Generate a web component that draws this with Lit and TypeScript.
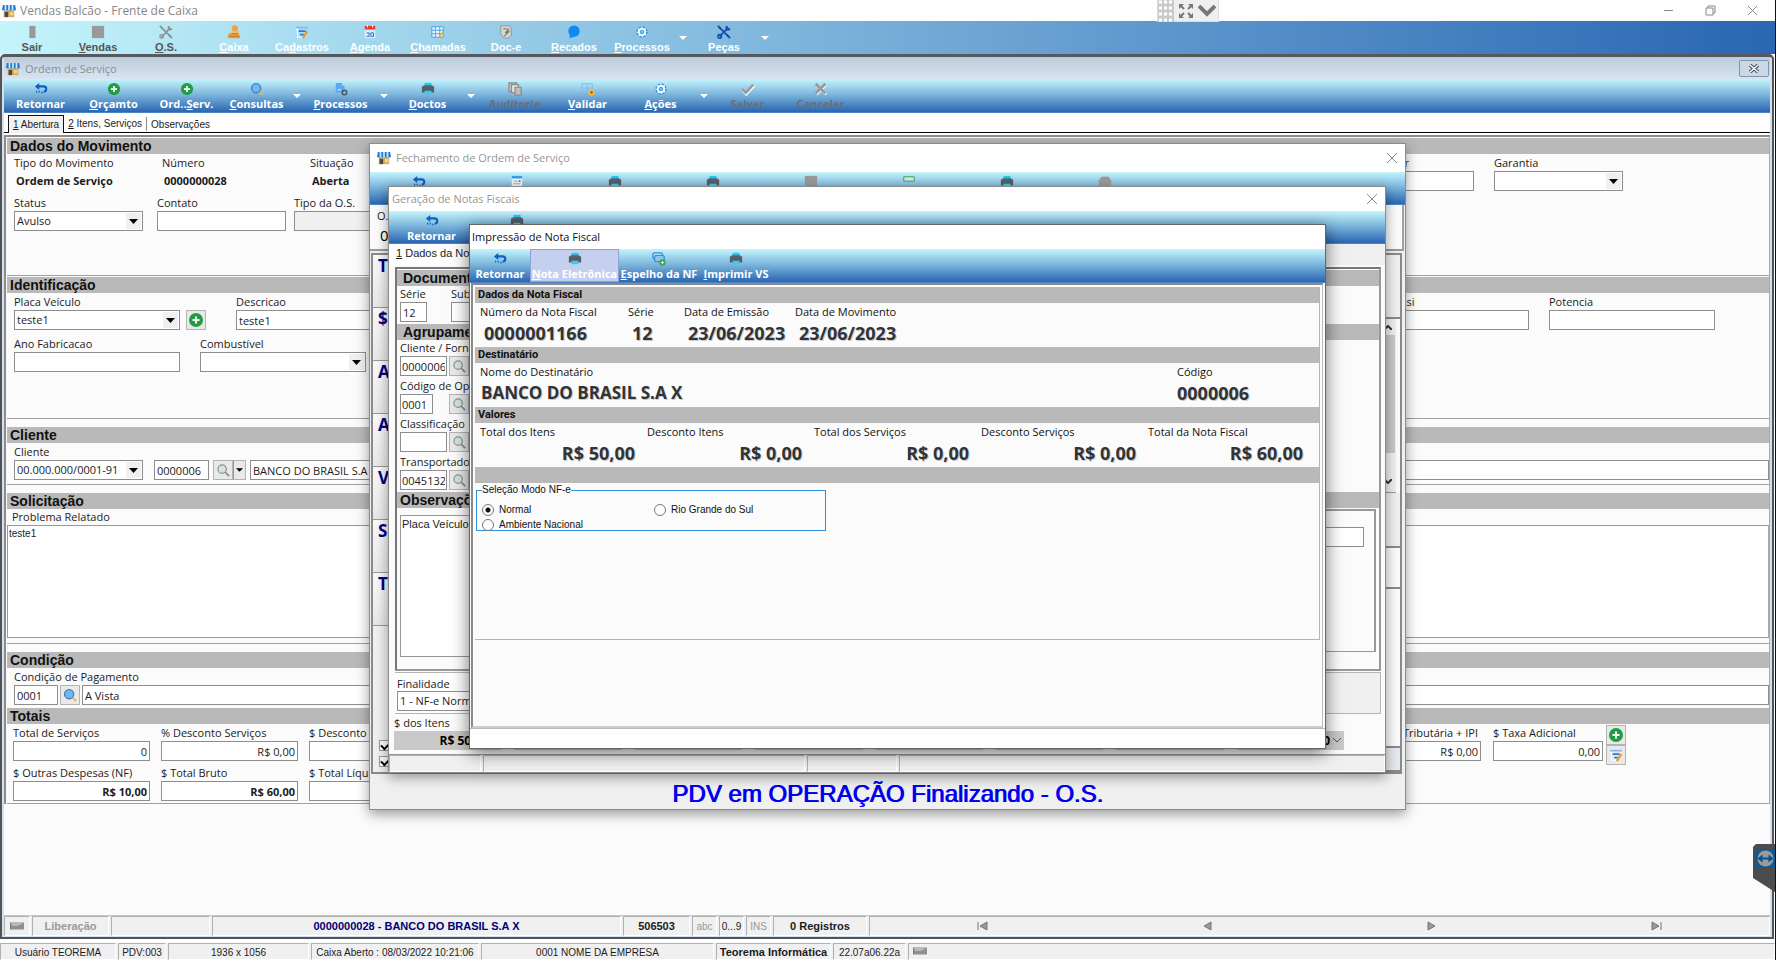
import { LitElement, html, css, svg, nothing } from "lit";
import { customElement } from "lit/decorators.js";
import { classMap } from "lit/directives/class-map.js";

const glyphs: Record<string, unknown> = {
  store: svg`<path d="M2 7h12v8H2z" fill="#c9a97a"/><path d="M3 9h4v6H3z" fill="#5a4636"/><path d="M9 9h4v4H9z" fill="#ffd75a"/><path d="M1 1h14l1 6H0z" fill="#1e78d6"/><path d="M3 1h2v6H3zM7 1h2v6H7zM11 1h2v6h-2z" fill="#cfe6fa"/>`,
  back: svg`<path d="M4 5h7a3 3 0 0 1 0 6" fill="none" stroke="#0f5fc2" stroke-width="2.4"/><path d="M1 5l5-4v8z" fill="#0f5fc2"/><path d="M3 10v2M6 10v2M9 11v2" stroke="#0f5fc2" stroke-width="1.4"/>`,
  plus: svg`<circle cx="8" cy="8" r="7" fill="#1f9d45"/><path d="M8 4.500v7M4.500 8h7" stroke="#fff" stroke-width="2"/>`,
  search: svg`<path d="M11 11l4 4" stroke="#e8b25a" stroke-width="2"/><circle cx="7" cy="7" r="5.200" fill="#6db9f5" stroke="#4a7fb5" stroke-width="1.600"/>`,
  searchGray: svg`<path d="M10 10l5 5" stroke="#8a8a8a" stroke-width="2"/><circle cx="7" cy="7" r="4.800" fill="#d3e2e2" stroke="#8a9494" stroke-width="1.400"/>`,
  docGear: svg`<path d="M2 1h7l3 3v8H2z" fill="#5aa9f2"/><path d="M9 1v3h3z" fill="#bfe0fb"/><path d="M4 9h4" stroke="#fff"/><circle cx="12" cy="12" r="2.600" fill="#8db4d6" stroke="#44566a" stroke-width="1.600"/>`,
  printer: svg`<path d="M4 1h8v4H4z" fill="#27c4ea"/><path d="M1 5h14v7H1z" fill="#565d66"/><path d="M2 5l1-1h10l1 1z" fill="#3d444c"/><path d="M4 10h8v4H4z" fill="#35cdf0"/>`,
  copies: svg`<path d="M1 1h9v10H1z" fill="#c4c4c4" stroke="#8b8b8b" stroke-width="1.400"/><path d="M4 3h8v9H4z" fill="#e4e4e4" stroke="#8b8b8b" stroke-width="1.400"/><path d="M8 6h7v9H8z" fill="#bdbdbd" stroke="#8b8b8b" stroke-width="1.400"/>`,
  valid: svg`<path d="M1 2h12v10H1zM1 7h12M7 2v10" fill="none" stroke="#7fbdf0"/><circle cx="12" cy="12" r="2.600" fill="#f04a1c" stroke="#ffc21a" stroke-width="1.800"/>`,
  gear: svg`<circle cx="8" cy="8" r="5.500" fill="#eaf7ff" stroke="#2f9be6" stroke-width="2" stroke-dasharray="2.600 1.720"/><circle cx="8" cy="8" r="4.600" fill="#f4fbff"/><circle cx="8" cy="8" r="2" fill="#8ec5ec" stroke="#2f86c9"/>`,
  check: svg`<path d="M2 9l4 5 9-10" fill="none" stroke="#fff" stroke-width="3"/><path d="M1.500 8l4 4.500L14 3" fill="none" stroke="#9a9a9a" stroke-width="2.800"/>`,
  cross: svg`<path d="M3 3l11 11M14 3L3 14" stroke="#f4f4f4" stroke-width="3"/><path d="M2 2l11 11M13 2L2 13" stroke="#9a9a9a" stroke-width="3.200"/>`,
  door: svg`<path d="M5 1h7v14H5z" fill="#999"/>`,
  block: svg`<path d="M1 1h14v14H1z" fill="#999"/>`,
  tools: svg`<path d="M3 14L13 3M3 3l10 10" stroke="#8f8f8f" stroke-width="1.800"/><circle cx="3" cy="13" r="2" fill="none" stroke="#8f8f8f" stroke-width="1.500"/><path d="M11 1v4h4M11 11l4 4M1 1l3 3" fill="none" stroke="#8f8f8f" stroke-width="2"/>`,
  toolsBlue: svg`<path d="M3 13L13 3M3 3l10 10" stroke="#0f4fae" stroke-width="2"/><circle cx="3" cy="13" r="2" fill="none" stroke="#0f4fae" stroke-width="1.800"/><path d="M11 1v4h4M11 11l4 4M1 1l3 3" fill="none" stroke="#0f4fae" stroke-width="2.400"/>`,
  money: svg`<circle cx="9" cy="4" r="3.600" fill="#eda345"/><path d="M5 7h9v3H5z" fill="#f3bd6c"/><path d="M3 9h9l3 3v3H1v-4z" fill="#e7a04a"/><path d="M2 13h12M5 10h8" stroke="#b8731f"/>`,
  form: svg`<path d="M1 2h14v2H1z" fill="#8fb4ee"/><path d="M4 7h8M6 11h4" stroke="#1f7fe6" stroke-width="2"/><path d="M1 5h2v9h7" fill="none" stroke="#fff" stroke-width="1.200"/><path d="M9 15l5-8" stroke="#f7941d" stroke-width="2.400"/>`,
  calendar: svg`<path d="M2 6h12v9H2z" fill="#d8efff"/><path d="M2 1h12v4H2z" fill="#e23b2e"/><path d="M5 0v3M11 0v3" stroke="#fff"/><path d="M4 9h3v4H4M9 9h3v4H9z" fill="none" stroke="#2a62ad"/>`,
  table: svg`<path d="M1 2h13v12H1z" fill="#e9f6ff" stroke="#3a9ee6"/><path d="M1 6h13M1 10h13M5 2v12M10 2v12" stroke="#3a9ee6"/><path d="M9 14l5-6" stroke="#f7b21d" stroke-width="2"/>`,
  doce: svg`<path d="M2 1h10l2 3v8l-4 3H6L2 10z" fill="#d3d8d2" stroke="#8c938c"/><path d="M5 4l6 1-4 4 5-2-6 6" fill="none" stroke="#74806f" stroke-width="1.300"/>`,
  chat: svg`<circle cx="8" cy="7" r="6.500" fill="#0f8af0"/><path d="M3 10v5l6-2z" fill="#0f8af0"/>`,
  mirror: svg`<rect x="1" y="1" width="11" height="7" rx="2" fill="none" stroke="#2f8fd8" stroke-width="1.400"/><rect x="3" y="4" width="11" height="7" rx="2" fill="#8ec6ea" stroke="#2f8fd8" stroke-width="1.400"/><circle cx="12" cy="12" r="3.600" fill="#2ea64f"/><path d="M12 10v4M10 12h4" stroke="#fff"/>`,
  sheet: svg`<path d="M2 1h12v14H2z" fill="#eaf4fd"/><path d="M2 1h12v3H2z" fill="#3d9be8"/><path d="M4 7h5M4 10h8" stroke="#8ba6bf"/><path d="M10 6h2v2h-2z" fill="#e23b2e"/>`,
  greenBox: svg`<path d="M2 2h12v5H2z" fill="#cfe9e6" stroke="#2d9a4b"/>`,
  octagon: svg`<path d="M4 2h8l3 4v8H1V6z" fill="#999"/>`,
  card: svg`<path d="M0 4h16v8H0z" fill="#8f8f8f"/><path d="M0 4h16L9 8H3z" fill="#b9b9b9"/><path d="M0 12V4" stroke="#666"/>`,
};
const icon = (name: string, size = "") =>
  html`<svg class="icon ${size}" viewBox="0 0 16 16" aria-hidden="true">${glyphs[name]}</svg>`;

interface Tool { icon: string; text?: string; key?: number; menu?: boolean; off?: boolean; dark?: boolean; on?: boolean; narrow?: boolean }

const mainTools: Tool[] = [
  { icon: "door", text: "Sair", dark: true },
  { icon: "block", text: "Vendas", key: 0, dark: true },
  { icon: "tools", text: "O.S.", key: 0, dark: true },
  { icon: "money", text: "Caixa", key: 0 },
  { icon: "form", text: "Cadastros", key: 2 },
  { icon: "calendar", text: "Agenda", key: 0 },
  { icon: "table", text: "Chamadas", key: 0 },
  { icon: "doce", text: "Doc-e" },
  { icon: "chat", text: "Recados", key: 0 },
  { icon: "gear", text: "Processos", key: 0, menu: true },
  { icon: "toolsBlue", text: "Peças", menu: true },
];
const orderTools: Tool[] = [
  { icon: "back", text: "Retornar" },
  { icon: "plus", text: "Orçamto", key: 0 },
  { icon: "plus", text: "Ord..Serv.", key: 5 },
  { icon: "search", text: "Consultas", key: 0, menu: true, narrow: true },
  { icon: "docGear", text: "Processos", key: 0, menu: true },
  { icon: "printer", text: "Doctos", key: 0, menu: true },
  { icon: "copies", text: "Auditoria", key: 0, off: true },
  { icon: "valid", text: "Validar", key: 0 },
  { icon: "gear", text: "Ações", key: 0, menu: true },
  { icon: "check", text: "Salvar", key: 0, off: true },
  { icon: "cross", text: "Cancelar", off: true },
];
const closingTools: Tool[] = ["back", "sheet", "printer", "printer", "block", "greenBox", "printer", "octagon"].map((i) => ({ icon: i }));
const notesTools: Tool[] = [{ icon: "back", text: "Retornar" }, { icon: "printer" }];
const printTools: Tool[] = [
  { icon: "back", text: "Retornar" },
  { icon: "printer", text: "Nota Eletrônica", key: 0, on: true },
  { icon: "mirror", text: "Espelho da NF", key: 0 },
  { icon: "printer", text: "Imprimir VS", key: 0 },
];

const keyed = (t: string, k?: number) =>
  k === undefined ? t : html`${t.slice(0, k)}<u>${t[k]}</u>${t.slice(k + 1)}`;

const toolbar = (tools: Tool[], kind: string) => html`<nav class="toolbar ${kind}">
  ${tools.map((t) => html`<button class=${classMap({ tool: true, off: !!t.off, dark: !!t.dark, on: !!t.on, narrow: !!t.narrow })} ?disabled=${!!t.off}>
      ${icon(t.icon)}${t.text ? html`<span>${keyed(t.text, t.key)}</span>` : nothing}
    </button>${t.menu ? html`<button class="drop" aria-label=${t.text}><svg viewBox="0 0 8 4"><path d="M0 0h8L4 4z" fill="#fff"/></svg></button>` : nothing}`)}
</nav>`;

const text = (id: string, label: string, value = "", cls = "") => html`<div class="field ${cls}">
  <label for=${id}>${label}</label><input id=${id} .value=${value} />
</div>`;

const pick = (id: string, label: string, value = "", cls = "") => html`<div class="field ${cls}">
  <label for=${id}>${label}</label>
  <div class="sel"><select id=${id}><option>${value}</option></select>
  <span class="arrow"><svg viewBox="0 0 9 5"><path d="M0 0h9L4.500 5z"/></svg></span></div>
</div>`;

const lookup = (id: string, label: string, value: string, cls = "") => html`<div class="field">
  <label for=${id}>${label}</label>
  <div class="line"><input id=${id} class=${cls} .value=${value} /><button class="mini lens" aria-label=${label}>${icon("searchGray")}</button></div>
</div>`;

const closeX = html`<button class="x" aria-label="Fechar"><svg viewBox="0 0 10 10"><path d="M0 0l10 10M10 0L0 10"/></svg></button>`;

@customElement("app-root")
export class AppRoot extends LitElement {
  static styles = css`
    :host { display: block; font: 11px/16px "Open Sans", sans-serif; color: #1c1c1c; --ms: "Liberation Sans", Arial, sans-serif; }
    * { box-sizing: border-box; }
    button, input, select, textarea { font: inherit; color: inherit; margin: 0; border-radius: 0; }
    button { padding: 0; border: 0; background: none; }
    fieldset { min-width: 0; }
    .icon { width: 14px; height: 14px; display: block; flex: none; }
    .s16 { width: 16px; height: 16px; }
    .screen { position: relative; display: flex; flex-direction: column; min-height: 100vh; background: #fdfdfd; border-right: 1px solid #111; overflow: hidden; }

    .titlebar { display: flex; align-items: center; height: 21px; padding-left: 2px; gap: 4px; color: #888; font-size: 12px; background: #fefefe; }
    .titlebar .caption { flex: 1; }
    .sysbuttons { display: flex; gap: 31px; padding-right: 17px; }
    .sysbuttons svg { display: block; width: 11px; height: 11px; fill: none; stroke: #888; }
    .remote { position: absolute; top: 0; left: 65.200%; display: flex; height: 22px; background: #efefef; border: 1px solid #ddd; border-top: 0; align-items: center; gap: 5px; padding-right: 2px; }
    .remote svg { display: block; }

    .toolbar { display: flex; height: 33px; background: linear-gradient(#c4f5fc, #7fb8de 45%, #2a66b2); border-bottom: 1px solid #4a83c6; }
    .toolbar.top { background: linear-gradient(90deg, #c4f5fc, #5c96cc 66%, #2a66b2); font-family: var(--ms); border-bottom: 0; }
    .tool { display: flex; flex-direction: column; align-items: center; gap: 1px; color: #fff; font-weight: 700; padding-top: 3px; white-space: nowrap; flex: none; }
    .tool span { line-height: 14px; }
    .top .tool { width: 68px; padding-top: 4px; }
    .top .tool:first-child { width: 64px; }
    .order { height: 34px; }
    .toolbar.order .tool { width: 73px; padding-top: 3px; }
    .toolbar.order .narrow { width: 67px; }
    .closing .tool { width: 98px; }
    .notes .tool { width: 85px; }
    .print .tool { width: 74px; padding-top: 2px; border: 1px solid transparent; }
    .print .tool:nth-child(1) { width: 60px; }
    .print .tool:nth-child(2) { width: 89px; }
    .print .tool:nth-child(3) { width: 80px; }
    .print .tool.on { background: #c5d0ee; border-color: #8f9fd8; }
    .tool.dark { color: #555; }
    .tool.off { color: #66707c; }
    .drop { width: 14px; }
    .drop svg { width: 8px; height: 4px; display: block; margin: 0 auto; }

    .mdi { flex: 1; display: flex; flex-direction: column; margin-right: 1px; border: 2px solid #505358; border-top: 3px solid #55585c; border-radius: 5px 5px 0 0; background: #d6e1ee; padding: 0 2px 1px; min-width: 0; }
    .mdititle { display: flex; align-items: center; height: 22px; gap: 5px; padding: 1px 0 0 2px; color: #8a8f95; background: linear-gradient(#bccbda, #d8e4f1); }
    .mdititle .caption { flex: 1; }
    .mdiclose { width: 30px; height: 17px; border: 1px solid #8295ae; border-radius: 2px; background: #cbd8e6; margin-right: 1px; }
    .mdiclose svg { display: block; width: 10px; height: 9px; margin: 0 auto; }
    .tabs { display: flex; height: 20px; padding: 2px 0 0 4px; background: #fefefe; border-bottom: 1px solid #000; font: 10px/17px var(--ms); }
    .tab { padding: 0 4px; height: 17px; white-space: nowrap; }
    .tab.active { border: 1px solid #111; border-bottom: 0; height: 18px; background: #f2f2f2; padding: 0 4px; }
    .tab + .tab + .tab { border-left: 1px solid #888; height: 14px; margin-top: 2px; line-height: 13px; }
    .sheet { flex: 1; background: #fbfbfb; border-top: 2px solid #fefefe; }
    .form { border: 2px solid #8c8c8c; border-right: 1px solid #aaa; border-bottom: 0; padding: 1px 0 0 1px; height: 100%; }

    .sec { border-bottom: 1px solid #a0a0a0; margin-bottom: 8px; }
    .sec.tight { margin-bottom: 1px; }
    .sec.nob { border-bottom: 0; }
    .bar { height: 16px; background: #b9b9b9; font: 700 14px/16px var(--ms); padding-left: 3px; margin: 0; color: #111; }
    .body { padding: 1px 0 0 7px; display: flex; }
    .stack { display: flex; flex-direction: column; gap: 4px; flex: 1; min-width: 0; }
    .stack.loose { gap: 6px; }
    .row { display: flex; align-items: flex-start; }
    .s-mov { min-height: 138px; }
    .s-id { min-height: 142px; }
    .s-cli { min-height: 58px; }
    .s-cond { min-height: 55px; }
    .s-tot { min-height: 96px; }

    .field { display: flex; flex-direction: column; white-space: nowrap; min-width: 0; flex: none; }
    .field input, .lineinput, select { height: 20px; border: 1px solid #8e8e8e; background: #fff; padding: 0 2px; width: 100%; outline: 0; line-height: 16px; }
    label { display: block; height: 16px; }
    .sel { display: grid; }
    .sel > * { grid-area: 1 / 1; }
    select { appearance: none; }
    .arrow { justify-self: end; margin: 2px; width: 15px; display: grid; place-items: center; background: #f0f0f0; pointer-events: none; }
    .arrow svg { width: 9px; height: 5px; }
    .w129 { width: 129px; }
    .w166 { width: 166px; }
    .w110 { width: 110px; }
    .w137 { width: 137px; }
    .w44 { width: 44px; }
    .lineinput.w55 { width: 55px; flex: none; }
    .grow { flex: 1; }
    .right input { text-align: right; }
    .strong input { font-weight: 700; }
    .dim input { background: #f0f0f0; }
    .endlabel label { text-align: right; padding-right: 3px; }
    .g3 { gap: 3px; }
    .g11 { gap: 11px; }
    .g14 { gap: 14px; }
    .g20 { gap: 20px; }
    .info { width: 148px; }
    .info b { display: block; padding: 2px 0 0 2px; height: 20px; }
    .tipo { margin-left: 8px; }
    .placa { margin-left: 6px; }
    .desc { margin-left: 30px; }
    .cli { flex: 1; margin-left: 11px; gap: 4px; }
    .cond { flex: 1; gap: 2px; margin-left: 2px; }
    .edge { margin-left: auto; display: flex; gap: 20px; }
    .edge.tot { gap: 12px; }
    .pad-mov { padding-right: 146px; }
    .pad-id { padding-right: 54px; }
    .pad-tot { padding-right: 143px; padding-left: 6px; }
    .mini { display: grid; place-items: center; width: 20px; height: 20px; background: #e9e9e9; border: 1px solid #b4b4b4; flex: none; }
    .mini.slim { width: 13px; border-left: 1px solid #999; }
    .mini.slim svg { width: 7px; height: 4px; }
    .line { display: flex; align-items: center; }
    .under { margin-top: 16px; }
    .minis { display: flex; flex-direction: column; }
    .memo { display: block; width: 100%; height: 113px; border: 1px solid #999; border-right-color: #aaa; background: #fff; resize: none; padding: 1px; outline: 0; font: 10px/14px var(--ms); }
    .memolabel { padding-left: 5px; }
    .s-sol { padding-bottom: 5px; }

    .nav { display: flex; height: 21px; background: #f0f0f0; border-top: 1px solid #c8c8c8; gap: 2px; font: 10px/19px var(--ms); }
    .cell { border: 1px solid #b0b0b0; border-right-color: #fff; border-bottom-color: #fff; text-align: center; white-space: nowrap; overflow: hidden; }
    .cell.b { font-weight: 700; font-size: 11px; }
    .cell.grayed { color: #999; }
    .cell.navy { color: #000078; }
    .c26 { width: 26px; display: grid; place-items: center; }
    .c76 { width: 77px; }
    .c99 { width: 99px; }
    .c410 { width: 409px; }
    .c67 { width: 67px; }
    .c25 { width: 25px; }
    .c93 { width: 94px; }
    .cursor { flex: 1; display: grid; grid-template-columns: repeat(4, 1fr); place-items: center; }
    .cursor svg { width: 12px; height: 10px; display: block; fill: #9a9a9a; stroke: #777; }
    .status { display: flex; margin-top: 4px; height: 17px; background: #f0f0f0; gap: 2px; font: 10px/17px var(--ms); }
    .s116 { width: 116px; }
    .s48 { width: 48px; }
    .s141 { width: 141px; }
    .s168 { width: 168px; }
    .s233 { width: 233px; }
    .s114 { width: 115px; }
    .s72 { width: 73px; }
    .s-rest { flex: 1; padding-left: 4px; }

    .win { position: absolute; display: flex; flex-direction: column; background: #fbfbfb; border: 1px solid #8b8b8b; box-shadow: 0 4px 12px rgba(0, 0, 0, 0.4); }
    .wtitle { display: flex; align-items: center; height: 24px; padding-left: 2px; gap: 5px; color: #969696; background: #fff; flex: none; }
    .wtitle .caption { flex: 1; }
    .x svg { width: 10px; height: 10px; display: block; stroke: #8a8a8a; fill: none; }
    .x { margin-right: 8px; }

    .w-close { left: 369px; top: 143px; width: 1037px; height: 667px; background: #f0f0f0; }
    .w-close .wtitle { height: 28px; padding-left: 7px; }
    .os { height: 46px; background: #fbfbfb; border-right: 2px solid #a0a0a0; border-bottom: 2px solid #999; padding: 3px 0 0 7px; margin-right: 1px; }
    .os big { display: block; font: 15px/22px "Open Sans", sans-serif; padding-left: 3px; color: #000; }
    .closebody { flex: 1; display: flex; margin: 2px 3px 0 1px; border: 2px solid #8a8a8a; background: #fbfbfb; min-height: 0; }
    .marks { flex: 1; margin: 0; padding: 0; list-style: none; color: #000080; font: 700 17px/22px "Open Sans", sans-serif; background: #f0f0f0; }
    .marks li { height: 53px; padding-left: 5px; border-bottom: 1px solid #999; background: linear-gradient(#fafafa, #e8e8e8); }
    .marks .ticks { height: auto; background: none; border: 0; padding: 114px 0 0 6px; }
    .tick { display: block; appearance: none; width: 11px; height: 11px; margin-bottom: 5px; background: #fff; border: 1px solid #999; }
    .tick::after { content: ""; display: block; width: 7px; height: 4px; margin: 1px; border: solid #000; border-width: 0 0 2px 2px; transform: rotate(-45deg); }
    .rail { width: 20px; display: flex; flex-direction: column; background: #fbfbfb; }
    .rail i { border-bottom: 2px solid #8a8a8a; }
    .r1 { height: 64px; background: #f0f0f0; }
    .r2 { height: 55px; background: #f0f0f0; }
    .r3 { height: 41px; }
    .r4 { flex: 1; }
    .r5 { height: 24px; background: #e6eaee; }
    .scroll { height: 174px; width: 16px; display: flex; flex-direction: column; align-items: center; background: #f0f0f0; padding: 6px 0 8px; gap: 5px; border-bottom: 1px solid #999; }
    .scroll svg { width: 8px; height: 5px; stroke: #333; stroke-width: 2; fill: none; }
    .thumb { width: 13px; height: 118px; background: #c8c8c8; margin-bottom: auto; }
    .pdv { height: 35px; display: grid; place-items: center; padding-top: 4px; color: #0000f0; font: 24px/28px var(--ms); text-shadow: 1px 0 0 #0000f0; }

    .w-notes { left: 388px; top: 186px; width: 998px; height: 587px; }
    .w-notes .wtitle { height: 24px; }
    .w-notes .caption { padding-left: 1px; }
    .ntabs { height: 21px; background: linear-gradient(90deg, #fdfdfd 120px, #f0f0f0 120px); padding-left: 7px; font: 11px/18px var(--ms); }
    .npanel { margin: 2px 4px 0 6px; border: 2px solid #777; border-right-color: #999; border-bottom-color: #999; padding-top: 1px; height: 404px; }
    .npanel .bar { padding-left: 6px; }
    .npanel .bar.obs { padding-left: 3px; }
    .npanel .body { padding: 1px 0 2px 3px; }
    .npanel .stack { gap: 3px; }
    .npanel .line { justify-content: space-between; width: 69px; }
    .g24 { gap: 24px; }
    .w27 { width: 27px; }
    .npanel .line input { padding: 0 1px; }
    .npanel .line input.w46 { width: 47px; }
    .npanel .line input.w33 { width: 33px; }
    .npanel label { height: 15px; line-height: 14px; }
    .obsrow { display: flex; height: 150px; padding: 0 3px; }
    .obsrow .memo { flex: 1; height: 142px; margin-top: 7px; font-size: 11px; line-height: 14px; }
    .side { width: 180px; height: 143px; border: solid #999; border-width: 2px 2px 1px 0; padding: 16px 10px 0 0; margin-top: 1px; }
    .final { margin: 1px 4px 0 6px; padding: 3px 0 2px 2px; border: 1px solid #b5b5b5; border-left: 0; background: linear-gradient(90deg, #fdfdfd 120px, #f0f0f0 120px); }
    .final label { height: 15px; line-height: 15px; }
    .sumrow { display: grid; grid-template-columns: repeat(8, 1fr); gap: 13px; margin: 1px 41px 0 5px; }
    .sum output { display: flex; align-items: center; justify-content: flex-end; height: 19px; background: #c9c9c9; font: 700 12px/18px "Open Sans", sans-serif; color: #000; padding-right: 3px; gap: 3px; }
    .sum:first-child output { padding-right: 13px; }
    .sum output svg { width: 8px; height: 5px; fill: none; stroke: #555; }
    .sum > span { display: block; height: 16px; }
    .ncells { margin-top: auto; display: flex; gap: 2px; height: 18px; border-top: 1px solid #999; background: #f0f0f0; }
    .n92 { width: 92px; }
    .n322 { width: 322px; }
    .n90 { width: 90px; }

    .w-print { left: 469px; top: 224px; width: 857px; height: 525px; color: #111; border-color: #666; box-shadow: 0 4px 16px rgba(0, 0, 0, 0.55); }
    .w-print .wtitle { color: #111; height: 24px; }
    .w-print .toolbar { height: 34px; }
    .ppanel { flex: 1; margin: 0 2px 0 1px; border: 2px solid #8a8a8a; border-right: 1px solid #bbb; border-bottom-color: #ccc; padding: 2px 2px 0 2px; }
    .ppanel .bar { font: 700 11px/15px Roboto, sans-serif; }
    .upper { height: 353px; border-bottom: 1px solid #b5b5b5; border-right: 1px solid #b5b5b5; }
    .facts { height: 44px; display: flex; padding: 1px 0 0 5px; }
    .fact span { display: block; white-space: nowrap; }
    .fact b { display: block; margin-top: 1px; font: 700 18px/24px "Open Sans", sans-serif; color: #333; padding-left: 4px; white-space: nowrap; text-shadow: 1px 1px 0 #c4ccd4; }
    .fact.wide b { font-size: 17px; padding-left: 1px; }
    .f148 { width: 148px; }
    .f56 { width: 56px; }
    .f111 { width: 111px; }
    .facts .last { margin-left: auto; width: 142px; }
    .facts .last b { padding-left: 0; }
    .money { display: grid; grid-template-columns: repeat(5, 167px); padding-left: 5px; margin-right: -4px; }
    .money b { text-align: right; padding-right: 12px; }
    .mode { width: 350px; height: 48px; margin: 0 0 0 1px; padding: 5px 0 0 5px; border: 1px solid #2f8fdc; font: 10px/15px var(--ms); display: grid; grid-template-columns: 172px 1fr; align-content: start; color: #111; }
    .mode legend { padding: 0; line-height: 14px; }
    .mode label { display: flex; align-items: center; gap: 5px; height: 15px; }
    .mode input { appearance: none; width: 12px; height: 12px; border: 1px solid #777; border-radius: 50%; background: #fff; }
    .mode input:checked { background: radial-gradient(circle, #111 0 2px, #fff 3px); }
    .pfoot { height: 20px; background: #fefefe; border-top: 1px solid #bbb; }

    .tv { position: absolute; right: 0; top: 844px; width: 22px; height: 48px; background: #4c4c4c; clip-path: polygon(0 3px, 3px 0, 100% 0, 100% 100%, 0 34px); padding: 5px 0 0 3px; }
    .tv svg { display: block; width: 19px; height: 19px; }
  `;

  render() {
    return html`<div class="screen">
      <header class="titlebar">${icon("store")}<span class="caption">Vendas Balcão - Frente de Caixa</span>
        <div class="sysbuttons">
          <button aria-label="Minimizar"><svg viewBox="0 0 11 11"><path d="M1 5.500h9"/></svg></button>
          <button aria-label="Restaurar"><svg viewBox="0 0 11 11"><path d="M1 3h7v7H1zM3 3V1h7v7H8"/></svg></button>
          <button aria-label="Fechar"><svg viewBox="0 0 11 11"><path d="M1 1l9 9M10 1l-9 9"/></svg></button>
        </div>
      </header>
      ${toolbar(mainTools, "top")}
      ${this.order()}
      <footer class="status">
        <span class="cell s116">Usuário TEOREMA</span><span class="cell s48">PDV:003</span><span class="cell s141">1936 x 1056</span>
        <span class="cell s168">Caixa Aberto : 08/03/2022 10:21:06</span><span class="cell s233">0001 NOME DA EMPRESA</span>
        <span class="cell b s114">Teorema Informática</span><span class="cell s72">22.07a06.22a</span><span class="cell s-rest">${icon("card")}</span>
      </footer>
      ${this.closing()} ${this.notes()} ${this.printing()}
      <div class="remote">
        <svg width="16" height="22" viewBox="0 0 16 22"><path d="M0 0h16v22H0z" fill="#c9c9c9"/><path d="M1 2h15M1 8h15M1 14h15M1 20h15" stroke="#fff" stroke-width="3" stroke-dasharray="3 2"/></svg>
        <svg width="14" height="14" viewBox="0 0 14 14" fill="#777"><path d="M0 0h5L0 5zM14 0v5L9 0zM0 14V9l5 5zM14 14H9l5-5z"/><path d="M2 2l3 3M12 2L9 5M2 12l3-3M12 12L9 9" stroke="#777" stroke-width="2"/></svg>
        <svg width="18" height="12" viewBox="0 0 18 12"><path d="M1 1l8 8 8-8" fill="none" stroke="#777" stroke-width="4"/></svg>
      </div>
      <div class="tv"><svg viewBox="0 0 19 19"><path d="M0 0h19v19H0z" fill="#0d5a96"/><circle cx="9.500" cy="9.500" r="8" fill="#9a9a9a"/><path d="M1.500 9.500l5-4v3h6v-3l5 4-5 4v-3h-6v3z" fill="#0d4f88"/></svg></div>
    </div>`;
  }

  order() {
    return html`<main class="mdi">
      <div class="mdititle">${icon("store")}<span class="caption">Ordem de Serviço</span>
        <button class="mdiclose" aria-label="Fechar"><svg viewBox="0 0 10 9"><path d="M1 1l8 7M9 1L1 8" stroke="#4a5058" stroke-width="3.500"/><path d="M1 1l8 7M9 1L1 8" stroke="#fff" stroke-width="1.500"/></svg></button></div>
      ${toolbar(orderTools, "order")}
      <div class="tabs"><button class="tab active"><u>1</u> Abertura</button><button class="tab"><u>2</u> Itens, Serviços</button><button class="tab">Observações</button></div>
      <div class="sheet"><div class="form">
        <section class="sec tight s-mov"><h2 class="bar">Dados do Movimento</h2>
          <div class="body pad-mov"><div class="stack">
            <div class="row"><div class="info">Tipo do Movimento<b>Ordem de Serviço</b></div><div class="info">Número<b>0000000028</b></div><div class="info">Situação<b>Aberta</b></div></div>
            <div class="row">
              <div class="row g14">${pick("st", "Status", "Avulso", "w129")}${text("ct", "Contato", "", "w129")}</div>
              ${text("to", "Tipo da O.S.", "", "w137 dim tipo")}
            </div></div>
            <div class="edge">${text("vl", "Executor", "", "w110")}${pick("ga", "Garantia", "", "w129")}</div>
          </div></section>
        <section class="sec s-id"><h2 class="bar">Identificação</h2>
          <div class="body pad-id"><div class="stack loose">
            <div class="row">
              ${pick("pv", "Placa Veículo", "teste1", "w166")}
              <button class="mini under placa" aria-label="Adicionar">${icon("plus", "s16")}</button>
              ${text("de", "Descricao", "teste1", "w166 desc")}</div>
            <div class="row g20">${text("af", "Ano Fabricacao", "", "w166")}${pick("cb", "Combustível", "", "w166")}</div></div>
            <div class="edge">${text("ch", "Nr. Chassi", "", "w166")}${text("po", "Potencia", "", "w166")}</div>
          </div></section>
        <section class="sec s-cli"><h2 class="bar">Cliente</h2>
          <div class="body">${pick("cl", "Cliente", "00.000.000/0001-91", "w129")}
            <div class="line under cli">
              <input class="lineinput w55" aria-label="Código" .value=${"0000006"} />
              <div class="line"><button class="mini" aria-label="Pesquisar">${icon("searchGray")}</button><button class="mini slim" aria-label="Opções"><svg viewBox="0 0 8 4"><path d="M0 0h8L4 4z"/></svg></button></div>
              <input class="lineinput grow" aria-label="Nome" .value=${"BANCO DO BRASIL S.A X"} />
            </div></div></section>
        <section class="sec s-sol"><h2 class="bar">Solicitação</h2>
          <label class="memolabel" for="pr">Problema Relatado</label>
          <textarea id="pr" class="memo" .value=${"teste1"}></textarea></section>
        <section class="sec tight s-cond nob"><h2 class="bar">Condição</h2>
          <div class="body">${text("cp", "Condição de Pagamento", "0001", "w44")}
            <div class="line under cond"><button class="mini" aria-label="Pesquisar">${icon("search")}</button><input class="lineinput grow" aria-label="Descrição" .value=${"A Vista"} /></div></div></section>
        <section class="sec s-tot"><h2 class="bar">Totais</h2>
          <div class="body pad-tot"><div class="stack">
            <div class="row g11">${text("ts", "Total de Serviços", "0", "w137 right")}${text("ds", "% Desconto Serviços", "R$ 0,00", "w137 right")}${text("dv", "$ Desconto Serviços", "", "w137 right")}</div>
            <div class="row g11">${text("od", "$ Outras Despesas (NF)", "R$ 10,00", "w137 right strong")}${text("tb", "$ Total Bruto", "R$ 60,00", "w137 right strong")}${text("tl", "$ Total Líquido", "", "w137 right strong")}</div></div>
            <div class="edge tot">${text("tr", "Tributária + IPI", "R$ 0,00", "w110 right endlabel")}
              <div class="row g3">${text("ta", "$ Taxa Adicional", "0,00", "w110 right")}
              <div class="minis"><button class="mini" aria-label="Adicionar">${icon("plus", "s16")}</button><button class="mini" aria-label="Editar">${icon("form")}</button></div></div></div>
          </div></section>
      </div></div>
      <div class="nav">
        <button class="cell c26">${icon("card")}</button><span class="cell b grayed c76">Liberação</span><span class="cell c99"></span>
        <span class="cell b navy c410">0000000028 - BANCO DO BRASIL S.A X</span><span class="cell b c67">506503</span>
        <span class="cell grayed c25">abc</span><span class="cell c25">0...9</span><span class="cell grayed c25">INS</span>
        <span class="cell b c93">0 Registros</span>
        <div class="cell cursor">
          <button aria-label="Primeiro"><svg viewBox="0 0 12 10"><path d="M2 1v8M11 1v8L4 5z"/></svg></button>
          <button aria-label="Anterior"><svg viewBox="0 0 12 10"><path d="M10 1v8L3 5z"/></svg></button>
          <button aria-label="Próximo"><svg viewBox="0 0 12 10"><path d="M2 1v8l7-4z"/></svg></button>
          <button aria-label="Último"><svg viewBox="0 0 12 10"><path d="M1 1v8l7-4zM10 1v8"/></svg></button>
        </div>
      </div>
    </main>`;
  }

  closing() {
    return html`<section class="win w-close">
      <div class="wtitle">${icon("store")}<span class="caption">Fechamento de Ordem de Serviço</span>${closeX}</div>
      ${toolbar(closingTools, "closing")}
      <div class="os">O.<big>0</big></div>
      <div class="closebody">
        <ul class="marks">${["T", "$", "A", "A", "V", "S", "T"].map((m) => html`<li>${m}</li>`)}
          <li class="ticks"><input class="tick" type="checkbox" checked aria-label="Opção 1" /><input class="tick" type="checkbox" checked aria-label="Opção 2" /></li></ul>
        <div class="rail"><i class="r1"></i>
          <div class="scroll"><svg viewBox="0 0 8 5"><path d="M0 5l4-4 4 4"/></svg><span class="thumb"></span><svg viewBox="0 0 8 5"><path d="M0 0l4 4 4-4"/></svg></div>
          <i class="r2"></i><i class="r3"></i><i class="r4"></i><i class="r5"></i></div>
      </div>
      <div class="pdv">PDV em OPERAÇÃO Finalizando - O.S.</div>
    </section>`;
  }

  notes() {
    return html`<section class="win w-notes">
      <div class="wtitle"><span class="caption">Geração de Notas Fiscais</span>${closeX}</div>
      ${toolbar(notesTools, "notes")}
      <div class="ntabs"><u>1</u> Dados da Nota</div>
      <div class="npanel">
        <h2 class="bar">Documento</h2>
        <div class="body g24">${text("ns", "Série", "12", "w27")}${text("nb", "Sub", "", "w27")}</div>
        <h2 class="bar">Agrupamento</h2>
        <div class="body"><div class="stack">
          ${lookup("nc", "Cliente / Forne", "0000006", "w46")}${lookup("no", "Código de Op", "0001", "w33")}
          ${lookup("nl", "Classificação", "", "w46")}${lookup("nt", "Transportador", "0045132", "w46")}</div></div>
        <h2 class="bar obs">Observações</h2>
        <div class="obsrow"><textarea class="memo" aria-label="Observações" .value=${"Placa Veículo:"}></textarea>
          <div class="side"><input class="lineinput" aria-label="Valor" /></div></div>
      </div>
      <div class="final">${pick("fi", "Finalidade", "1 - NF-e Normal", "w166")}</div>
      <div class="sumrow">
        ${[0, 1, 2, 3, 4, 5, 6, 7].map((i) => html`<div class="sum"><span>${i === 0 ? "$ dos Itens" : nothing}</span>
          <output>${i === 0 ? "R$ 50,00" : i === 7 ? html`0<svg viewBox="0 0 8 5"><path d="M0 0l4 4 4-4"/></svg>` : nothing}</output></div>`)}
      </div>
      <div class="ncells"><span class="cell n92"></span><span class="cell n322"></span><span class="cell n90"></span><span class="cell grow"></span></div>
    </section>`;
  }

  printing() {
    const fact = (label: string, value: string, cls = "") => html`<div class="fact ${cls}"><span>${label}</span><b>${value}</b></div>`;
    const radio = (id: string, label: string, on = false) => html`<label for=${id}><input id=${id} type="radio" name="modo" ?checked=${on} />${label}</label>`;
    return html`<section class="win w-print">
      <div class="wtitle"><span class="caption">Impressão de Nota Fiscal</span></div>
      ${toolbar(printTools, "print")}
      <div class="ppanel"><div class="upper">
        <h2 class="bar">Dados da Nota Fiscal</h2>
        <div class="facts">${fact("Número da Nota Fiscal", "0000001166", "f148")}${fact("Série", "12", "f56")}${fact("Data de Emissão", "23/06/2023", "f111")}${fact("Data de Movimento", "23/06/2023")}</div>
        <h2 class="bar">Destinatário</h2>
        <div class="facts">${fact("Nome do Destinatário", "BANCO DO BRASIL S.A X", "wide")}${fact("Código", "0000006", "last")}</div>
        <h2 class="bar">Valores</h2>
        <div class="facts money">${fact("Total dos Itens", "R$ 50,00")}${fact("Desconto Itens", "R$ 0,00")}${fact("Total dos Serviços", "R$ 0,00")}${fact("Desconto Serviços", "R$ 0,00")}${fact("Total da Nota Fiscal", "R$ 60,00")}</div>
        <div class="bar"></div>
        <fieldset class="mode"><legend>Seleção Modo NF-e</legend>
          ${radio("m1", "Normal", true)}${radio("m2", "Rio Grande do Sul")}${radio("m3", "Ambiente Nacional")}</fieldset>
      </div></div>
      <div class="pfoot"></div>
    </section>`;
  }
}
